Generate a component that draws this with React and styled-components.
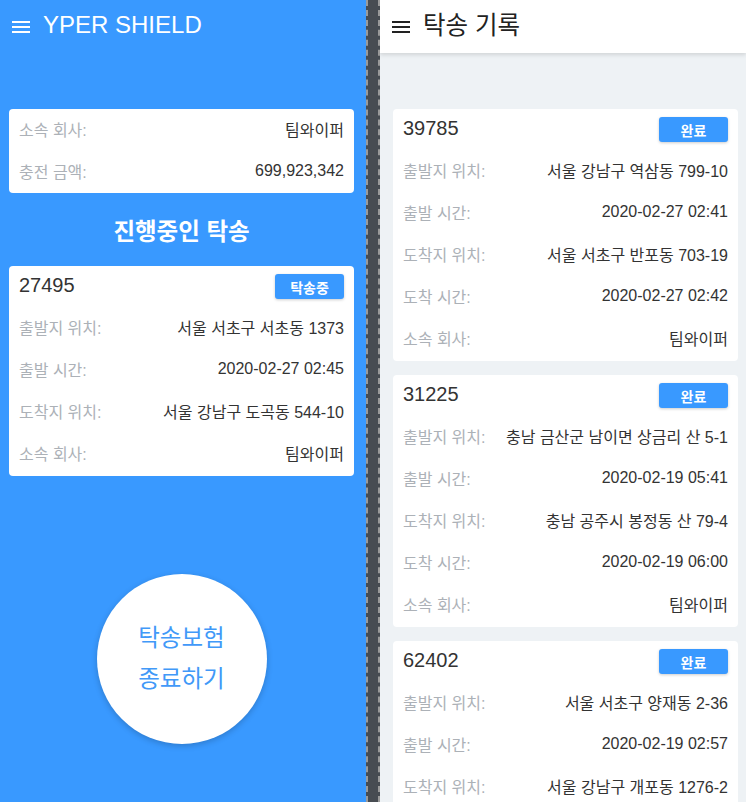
import React from 'react'
import styled, { createGlobalStyle } from 'styled-components'

const BLUE = '#3999ff'

const Global = createGlobalStyle`
  html, body { margin: 0; padding: 0; height: 100%; overflow: hidden; }
  body { font-family: "Liberation Sans", "Noto Sans CJK KR", sans-serif; }
  * { box-sizing: border-box; }
`

const Screen = styled.div`
  display: flex;
  height: 100vh;
  overflow: hidden;
`

const Panel = styled.div`
  width: 366px;
  flex-shrink: 0;
  display: flex;
  flex-direction: column;
  background: ${p => (p.$blue ? BLUE : '#eef2f5')};
  overflow: hidden;
`

const Divider = styled.div`
  width: 14px;
  flex-shrink: 0;
  background: #474c52;
  border-left: 2px dashed #9a9a9a;
  border-right: 2px dashed #9a9a9a;
`

const Header = styled.div`
  height: 53px;
  flex-shrink: 0;
  display: flex;
  align-items: center;
  padding-left: 12px;
  gap: 13px;
  color: ${p => (p.$light ? '#fff' : '#222')};
  background: ${p => (p.$light ? 'transparent' : '#fff')};
  box-shadow: ${p => (p.$light ? 'none' : '0 2px 4px rgba(0,0,0,0.12)')};
  position: relative;
  z-index: 1;
`

const Burger = styled.span`
  display: flex;
  flex-direction: column;
  gap: 3px;
  width: 18px;
  padding-top: 1px;
  span {
    height: 2px;
    background: currentColor;
  }
`

const Title = styled.div`
  font-size: ${p => p.$size || 24.5}px;
  line-height: 1;
  padding-bottom: ${p => (p.$size ? 4 : 1)}px;
`

const Content = styled.div`
  display: flex;
  flex-direction: column;
  padding: 56px ${p => p.$right}px 0 ${p => p.$left}px;
`

const Card = styled.div`
  background: #fff;
  border-radius: 4px;
  padding: ${p => (p.$header ? '8px 10px 1px' : '0 10px')};
  margin-bottom: ${p => p.$gap || 0}px;
`

const CardHead = styled.div`
  height: 33px;
  display: flex;
  justify-content: space-between;
  align-items: flex-start;
`

const Code = styled.div`
  font-size: 20px;
  color: #333;
  line-height: 22px;
`

const Badge = styled.div`
  width: 69px;
  height: 25px;
  border-radius: 3px;
  background: ${BLUE};
  color: #fff;
  font-size: 14px;
  font-weight: bold;
  display: flex;
  align-items: center;
  justify-content: center;
  box-shadow: 0 1px 3px rgba(0,0,0,0.2);
`

const Row = styled.div`
  height: 42px;
  display: flex;
  justify-content: space-between;
  align-items: center;
  font-size: 16px;
  padding-bottom: 3px;
`

const Label = styled.span`
  color: #acb1b7;
`

const Value = styled.span`
  color: #333;
`

const Section = styled.div`
  color: #fff;
  font-size: 23.5px;
  font-weight: bold;
  text-align: center;
  height: 73px;
  line-height: 67px;
  padding-top: 6px;
`

const CircleWrap = styled.div`
  display: flex;
  justify-content: center;
  padding-top: 98px;
`

const Circle = styled.button`
  width: 170px;
  height: 170px;
  border-radius: 50%;
  border: none;
  background: #fff;
  color: #4199f8;
  font-family: inherit;
  font-size: 23.5px;
  line-height: 41px;
  box-shadow: 0 2px 6px rgba(0,0,0,0.2);
  padding: 0;
`

const records = [
  {
    code: '39785',
    rows: [
      ['출발지 위치:', '서울 강남구 역삼동 799-10'],
      ['출발 시간:', '2020-02-27 02:41'],
      ['도착지 위치:', '서울 서초구 반포동 703-19'],
      ['도착 시간:', '2020-02-27 02:42'],
      ['소속 회사:', '팀와이퍼'],
    ],
  },
  {
    code: '31225',
    rows: [
      ['출발지 위치:', '충남 금산군 남이면 상금리 산 5-1'],
      ['출발 시간:', '2020-02-19 05:41'],
      ['도착지 위치:', '충남 공주시 봉정동 산 79-4'],
      ['도착 시간:', '2020-02-19 06:00'],
      ['소속 회사:', '팀와이퍼'],
    ],
  },
  {
    code: '62402',
    rows: [
      ['출발지 위치:', '서울 서초구 양재동 2-36'],
      ['출발 시간:', '2020-02-19 02:57'],
      ['도착지 위치:', '서울 강남구 개포동 1276-2'],
      ['도착 시간:', '2020-02-19 03:10'],
      ['소속 회사:', '팀와이퍼'],
    ],
  },
]

const current = [
  ['출발지 위치:', '서울 서초구 서초동 1373'],
  ['출발 시간:', '2020-02-27 02:45'],
  ['도착지 위치:', '서울 강남구 도곡동 544-10'],
  ['소속 회사:', '팀와이퍼'],
]

function Rows({ rows }) {
  return rows.map(([l, v]) => (
    <Row key={l}>
      <Label>{l}</Label>
      <Value>{v}</Value>
    </Row>
  ))
}

function Menu() {
  return (
    <Burger>
      <span />
      <span />
      <span />
    </Burger>
  )
}

export default function App() {
  return (
    <Screen>
      <Global />
      <Panel $blue>
        <Header $light>
          <Menu />
          <Title $size={24}>YPER SHIELD</Title>
        </Header>
        <Content $left={9} $right={12}>
          <Card>
            <Rows rows={[['소속 회사:', '팀와이퍼'], ['충전 금액:', '699,923,342']]} />
          </Card>
          <Section>진행중인 탁송</Section>
          <Card $header>
            <CardHead>
              <Code>27495</Code>
              <Badge>탁송중</Badge>
            </CardHead>
            <Rows rows={current} />
          </Card>
          <CircleWrap>
            <Circle>
              탁송보험
              <br />
              종료하기
            </Circle>
          </CircleWrap>
        </Content>
      </Panel>
      <Divider />
      <Panel>
        <Header>
          <Menu />
          <Title>탁송 기록</Title>
        </Header>
        <Content $left={13} $right={8}>
          {records.map(r => (
            <Card $header $gap={14} key={r.code}>
              <CardHead>
                <Code>{r.code}</Code>
                <Badge>완료</Badge>
              </CardHead>
              <Rows rows={r.rows} />
            </Card>
          ))}
        </Content>
      </Panel>
    </Screen>
  )
}
